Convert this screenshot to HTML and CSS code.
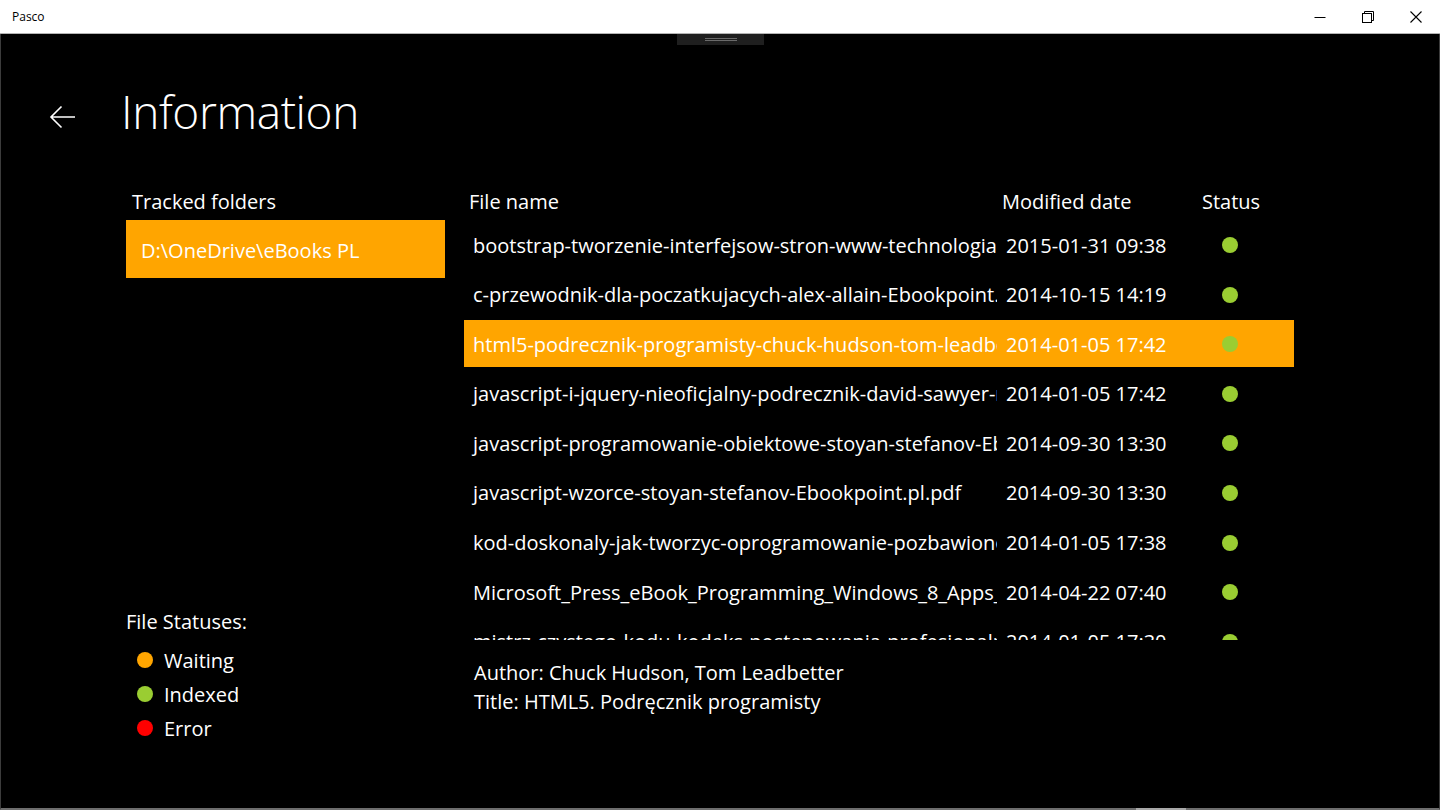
FILE: index.html
```html
<!DOCTYPE html>
<html lang="en">
<head>
  <meta charset="UTF-8">
  <title>Pasco</title>
  <link rel="stylesheet" href="styles.css">
</head>
<body>

  <div class="window">
    <div class="titlebar">
      <span class="app-name">Pasco</span>
      <div class="controls">
        <span class="ctl">
          <svg width="12" height="12" viewBox="0 0 12 12"><path d="M0.5 6.5h11" stroke="#000" stroke-width="1" fill="none"/></svg>
        </span>
        <span class="ctl">
          <svg width="12" height="12" viewBox="0 0 12 12"><rect x="0.5" y="2.5" width="9" height="9" stroke="#000" fill="none"/><path d="M2.5 2.5v-2h9v9h-2" stroke="#000" fill="none"/></svg>
        </span>
        <span class="ctl">
          <svg width="12" height="12" viewBox="0 0 12 12"><path d="M0.5 0.5l11 11M11.5 0.5l-11 11" stroke="#000" stroke-width="1.1" fill="none"/></svg>
        </span>
      </div>
    </div>

    <div class="app">
      <div class="grip"><span></span><span></span></div>

      <header class="page-header">
        <span class="back">
          <svg width="27" height="24" viewBox="0 0 27 24"><path d="M26 12H2M12.5 1.5L2 12l10.5 10.5" stroke="#fff" stroke-width="1.6" fill="none"/></svg>
        </span>
        <h1>Information</h1>
      </header>

      <div class="main">
        <aside class="folders">
          <div class="col-title tracked">Tracked folders</div>
          <div class="folder selected">D:\OneDrive\eBooks PL</div>

          <div class="legend">
            <div class="legend-title">File Statuses:</div>
            <div class="legend-item"><span class="dot waiting"></span>Waiting</div>
            <div class="legend-item"><span class="dot indexed"></span>Indexed</div>
            <div class="legend-item"><span class="dot error"></span>Error</div>
          </div>
        </aside>

        <section class="files">
          <div class="file-head">
            <span class="c-name">File name</span>
            <span class="c-date">Modified date</span>
            <span class="c-status">Status</span>
          </div>

          <div class="file-list" id="fileList"></div>

          <div class="details">
            <div>Author: Chuck Hudson, Tom Leadbetter</div>
            <div>Title: HTML5. Podręcznik programisty</div>
          </div>
        </section>
      </div>
    </div>
    <div class="bottom-thumb"></div>
  </div>

  <script>
  const files = [
    { name: "bootstrap-tworzenie-interfejsow-stron-www-technologia-mobile-first-Ebookpoint.pl.pdf", date: "2015-01-31 09:38" },
    { name: "c-przewodnik-dla-poczatkujacych-alex-allain-Ebookpoint.pl.pdf", date: "2014-10-15 14:19" },
    { name: "html5-podrecznik-programisty-chuck-hudson-tom-leadbetter-Ebookpoint.pl.pdf", date: "2014-01-05 17:42", selected: true },
    { name: "javascript-i-jquery-nieoficjalny-podrecznik-david-sawyer-mcfarland-Ebookpoint.pl.pdf", date: "2014-01-05 17:42" },
    { name: "javascript-programowanie-obiektowe-stoyan-stefanov-Ebookpoint.pl.pdf", date: "2014-09-30 13:30" },
    { name: "javascript-wzorce-stoyan-stefanov-Ebookpoint.pl.pdf", date: "2014-09-30 13:30" },
    { name: "kod-doskonaly-jak-tworzyc-oprogramowanie-pozbawione-bledow-steve-mcconnell-Ebookpoint.pl.pdf", date: "2014-01-05 17:38" },
    { name: "Microsoft_Press_eBook_Programming_Windows_8_Apps_HTML_CSS_JavaScript_2E.pdf", date: "2014-04-22 07:40" },
    { name: "mistrz-czystego-kodu-kodeks-postepowania-profesjonalnych-programistow-robert-c-martin-Ebookpoint.pl.pdf", date: "2014-01-05 17:30" }
  ];

  const list = document.getElementById("fileList");
  files.forEach(f => {
    const row = document.createElement("div");
    row.className = "file-row" + (f.selected ? " selected" : "");
    row.innerHTML = `
      <span class="c-name">${f.name}</span>
      <span class="c-date">${f.date}</span>
      <span class="c-status"><span class="dot indexed"></span></span>
    `;
    list.appendChild(row);
  });
  </script>

</body>
</html>
```

FILE: styles.css
```css
body {
  margin: 0;
  padding: 0;
  width: 1440px;
  height: 810px;
  overflow: hidden;
  background: #000;
  font-family: "Open Sans", "Noto Sans", sans-serif;
  color: #fff;
}
.window {
  position: relative;
  height: 810px;
  display: flex;
  flex-direction: column;
  box-sizing: border-box;
  border-left: 1px solid #3c3c3c;
  border-right: 1px solid #3c3c3c;
  border-bottom: 2px solid #6e6e6e;
}
.titlebar {
  height: 33px;
  background: #fff;
  border-bottom: 1px solid #b4b4b4;
  color: #000;
  display: flex;
  align-items: center;
  justify-content: space-between;
  margin: 0 -1px;
}
.app-name {
  font-size: 12px;
  padding-left: 12px;
  padding-bottom: 1px;
}
.controls {
  display: flex;
  height: 100%;
}
.ctl {
  width: 48px;
  display: flex;
  align-items: center;
  justify-content: center;
}
.app {
  position: relative;
  flex: 1;
  background: #000;
}
.grip {
  position: absolute;
  top: 0;
  left: 676px;
  width: 87px;
  height: 11px;
  background: #1f1f1f;
  display: flex;
  flex-direction: column;
  align-items: center;
  justify-content: center;
  gap: 1px;
}
.grip span {
  width: 32px;
  height: 1px;
  background: #6a6a6a;
}
.page-header {
  display: flex;
  align-items: center;
  height: 100px;
  padding-top: 54px;
  box-sizing: border-box;
}
.back {
  width: 27px;
  margin-left: 48px;
  margin-top: 12px;
  display: flex;
}
.page-header h1 {
  margin: 0 0 0 45px;
  font-weight: 300;
  font-size: 46px;
  line-height: 1;
  letter-spacing: -0.4px;
}
.main {
  display: grid;
  grid-template-columns: 319px 830px;
  column-gap: 19px;
  padding-left: 125px;
  margin-top: 54px;
}
.col-title {
  height: 32px;
  font-size: 20px;
  line-height: 28px;
}
.tracked {
  padding-left: 6px;
}
.folder {
  height: 58px;
  padding-left: 15px;
  font-size: 20px;
  line-height: 61px;
}
.selected {
  background: #ffa500;
}
.legend {
  margin-top: 330px;
}
.legend-title {
  font-size: 20px;
  line-height: 28px;
  margin-bottom: 7px;
}
.legend-item {
  display: flex;
  align-items: center;
  gap: 11px;
  padding-left: 11px;
  font-size: 20px;
  height: 34px;
}
.dot {
  display: inline-block;
  width: 16px;
  height: 16px;
  border-radius: 50%;
}
.waiting {
  background: #ffa500;
}
.indexed {
  background: #9acd32;
}
.error {
  background: #ff0000;
}
.file-head {
  display: flex;
  height: 33px;
  font-size: 20px;
  line-height: 28px;
}
.file-head .c-name {
  width: 533px;
  padding-left: 5px;
}
.file-head .c-date {
  width: 200px;
}
.file-list {
  height: 419px;
  overflow: hidden;
}
.file-row {
  display: flex;
  align-items: center;
  height: 47px;
  margin-bottom: 2.6px;
  font-size: 20px;
  padding-top: 1px;
  box-sizing: border-box;
}
.file-row .c-name {
  width: 524px;
  padding-left: 9px;
  margin-right: 5px;
  white-space: nowrap;
  overflow: hidden;
}
.file-row .c-date {
  width: 196px;
  padding-left: 4px;
}
.file-row .c-status {
  padding-left: 20px;
  display: flex;
}
.details {
  padding: 18px 0 0 10px;
  font-size: 20px;
  line-height: 29px;
}
.bottom-thumb {
  position: absolute;
  bottom: -2px;
  left: 1135px;
  width: 50px;
  height: 2px;
  background: #a8a8a8;
}
```
